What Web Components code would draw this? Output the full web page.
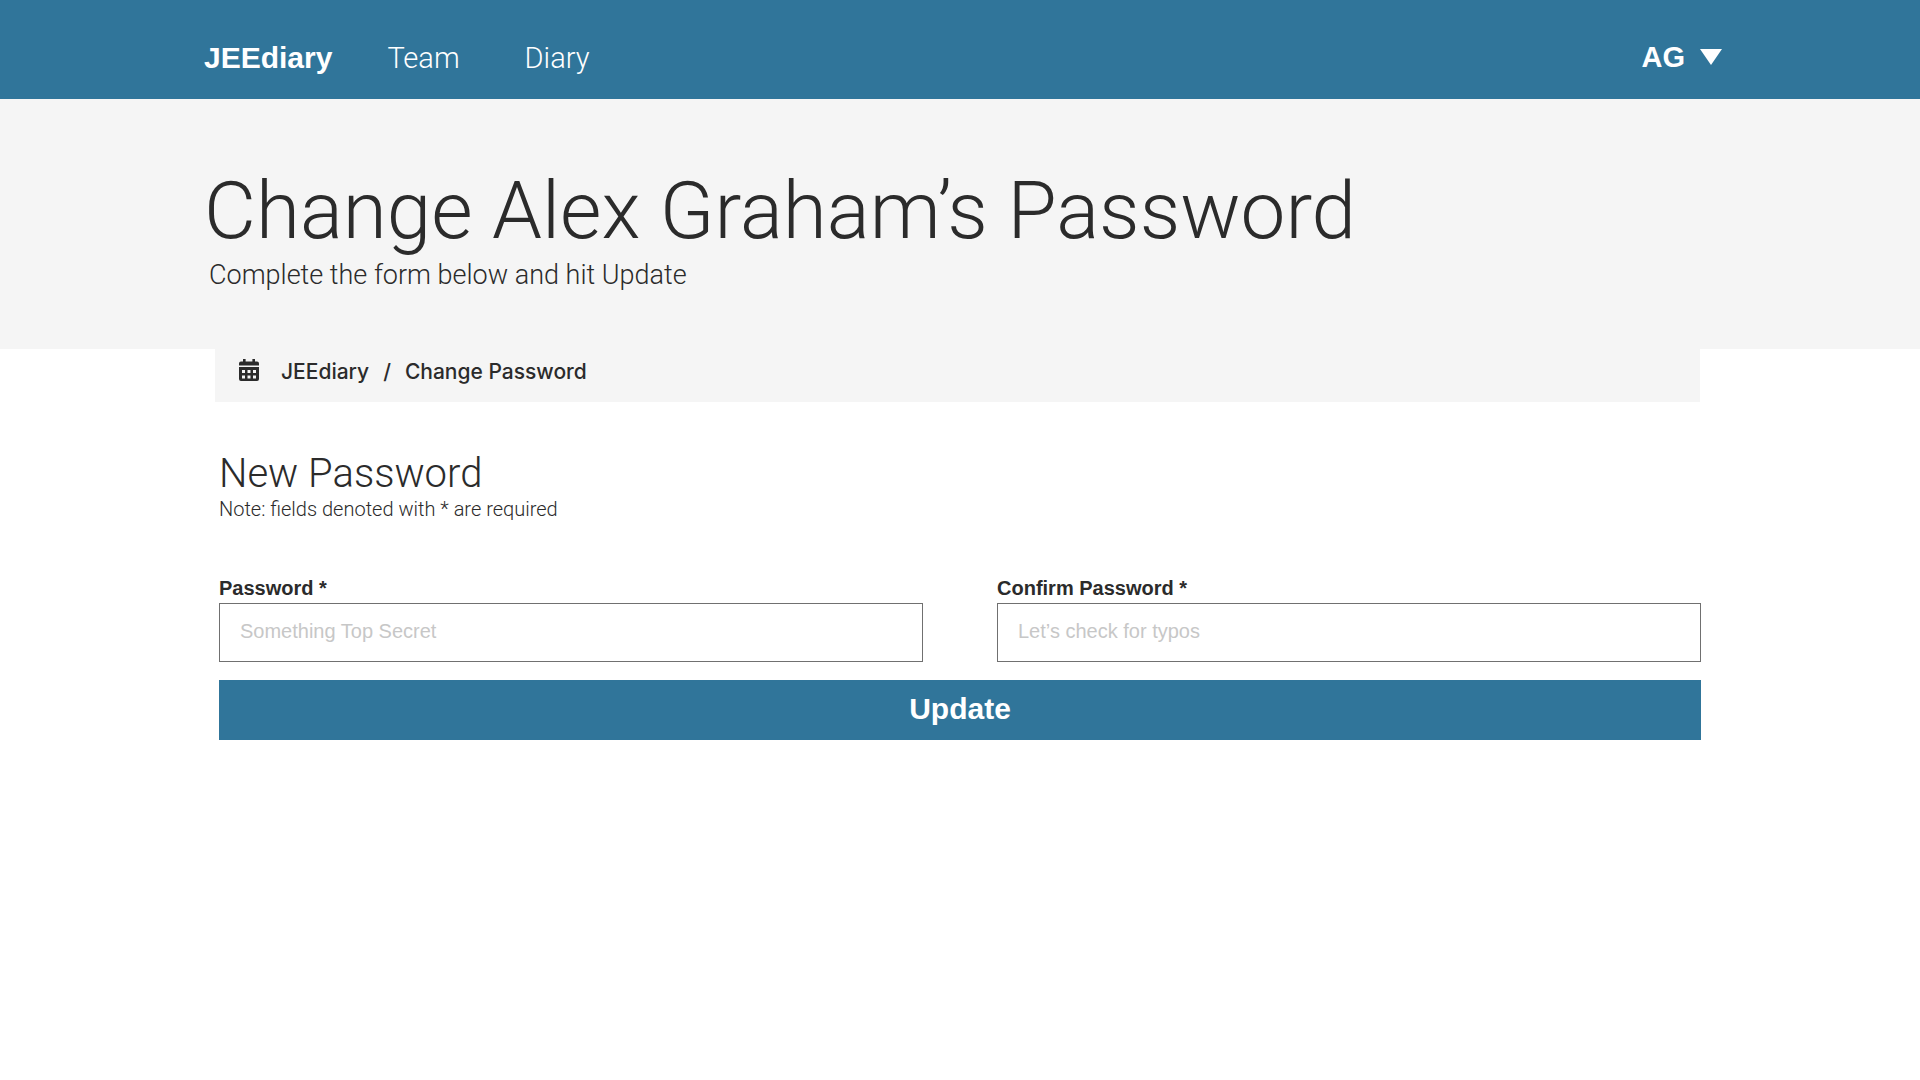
<!DOCTYPE html>
<html lang="en">
<head>
<meta charset="utf-8">
<title>JEEdiary - Change Password</title>
<style>
  :root {
    --brand: #30759a;
    --panel: #f5f5f5;
    --ink: #2b2b2b;
    --light-font: Roboto, "Liberation Sans", sans-serif;
    --light-weight: 300;
  }
  body {
    margin: 0;
    background: #fff;
    color: var(--ink);
    font-family: "Liberation Sans", Arial, sans-serif;
  }
</style>
</head>
<body>
<diary-page></diary-page>

<script>
  const define = (name, markup, setup) => {
    const template = document.createElement("template");
    template.innerHTML = markup;
    customElements.define(name, class extends HTMLElement {
      connectedCallback() {
        if (this.shadowRoot) return;
        this.attachShadow({ mode: "open" }).append(template.content.cloneNode(true));
        if (setup) setup(this, this.shadowRoot);
      }
    });
  };

  define("diary-header", `
    <style>
      :host { display: block; background: var(--brand); color: #fff; }
      .bar { display: flex; align-items: center; justify-content: space-between; height: 99px; padding: 15px 198px 0 204px; box-sizing: border-box; }
      nav { display: flex; align-items: baseline; gap: 65px; padding-top: 2px; font: var(--light-weight) 29px/36px var(--light-font); }
      a { color: inherit; text-decoration: none; }
      .brand { font: bold 30px/36px "Liberation Sans", Arial, sans-serif; margin-right: -10px; }
      button { display: flex; align-items: center; gap: 15px; padding: 0; border: 0; background: none; color: inherit; font: bold 29px/36px "Liberation Sans", Arial, sans-serif; cursor: pointer; }
      svg { display: block; }
      @media (max-width: 1100px) { .bar { padding-inline: 24px; } nav { gap: 32px; } }
    </style>
    <header class="bar">
      <nav aria-label="Main">
        <a class="brand" href="#">JEEdiary</a>
        <a href="#team">Team</a>
        <a href="#diary">Diary</a>
      </nav>
      <button type="button" aria-haspopup="menu">AG
        <svg width="22" height="16" viewBox="0 0 22 16" aria-hidden="true"><path d="M0 0H22L11 16Z" fill="currentColor"/></svg>
      </button>
    </header>`);

  define("page-hero", `
    <style>
      :host { display: block; background: var(--panel); padding: 66px 204px 57px; font-family: var(--light-font); font-weight: var(--light-weight); }
      h1 { margin: 0; font-size: 80px; line-height: 92px; font-weight: inherit; }
      p { margin: 0; padding: 2px 0 0 5px; font-size: 27px; line-height: 33px; }
      @media (max-width: 1100px) { :host { padding-inline: 24px; } h1 { font-size: 48px; line-height: 56px; } }
    </style>
    <h1><slot name="title"></slot></h1>
    <p><slot></slot></p>`);

  define("page-breadcrumb", `
    <style>
      :host { display: block; background: var(--panel); }
      nav { display: flex; align-items: center; gap: 22px; height: 53px; padding: 0 24px 11px; box-sizing: border-box; }
      svg { display: block; }
      ol { display: flex; gap: 14px; margin: 0; padding: 3px 0 0; list-style: none; font: 500 21px/24px Inter, "Liberation Sans", sans-serif; }
      a { color: inherit; text-decoration: none; }
    </style>
    <nav aria-label="Breadcrumb">
      <svg width="20" height="22" viewBox="0 0 20 22" fill="#2b2b2b" aria-hidden="true">
        <path d="M4 0H6.6V2.6H13.4V0H16V2.6H18Q20 2.6 20 4.6V6.5H0V4.6Q0 2.6 2 2.6H4Z"/>
        <path fill-rule="evenodd" d="M0 8H20V20Q20 22 18 22H2Q0 22 0 20ZM3 11V14H6V11ZM8.5 11V14H11.5V11ZM14 11V14H17V11ZM3 16.5V19.5H6V16.5ZM8.5 16.5V19.5H11.5V16.5ZM14 16.5V19.5H17V16.5Z"/>
      </svg>
      <ol>
        <li><a href="#">JEEdiary</a></li>
        <li aria-hidden="true">/</li>
        <li aria-current="page">Change Password</li>
      </ol>
    </nav>`);

  define("password-field", `
    <style>
      :host { display: block; min-width: 0; }
      label { display: block; font-weight: bold; font-size: 20px; line-height: 30px; }
      input { display: block; width: 100%; height: 59px; box-sizing: border-box; margin: 0; padding: 0 20px 2px; border: 1px solid #707070; border-radius: 0; background: #fff; color: var(--ink); font: 20px/24px "Liberation Sans", Arial, sans-serif; }
      input::placeholder { color: #c7c7c7; opacity: 1; }
    </style>
    <label for="field"></label>
    <input id="field" type="password" required>`,
    (host, root) => {
      root.querySelector("label").textContent = host.getAttribute("label");
      root.querySelector("input").placeholder = host.getAttribute("hint");
    });

  define("password-form", `
    <style>
      :host { display: block; }
      h2, p { margin: 0; font-family: var(--light-font); font-weight: var(--light-weight); }
      h2 { font-size: 40px; line-height: 46px; }
      p { font-size: 20px; line-height: 24px; }
      .fields { display: grid; grid-template-columns: 1fr 1fr; gap: 74px; margin: 52px 0 18px; }
      button { display: block; width: 100%; height: 60px; padding: 0 0 2px; border: 0; background: var(--brand); color: #fff; font: bold 30px/36px "Liberation Sans", Arial, sans-serif; cursor: pointer; }
      @media (max-width: 800px) { .fields { grid-template-columns: 1fr; gap: 18px; } }
    </style>
    <form>
      <h2>New Password</h2>
      <p>Note: fields denoted with * are required</p>
      <div class="fields">
        <password-field label="Password *" hint="Something Top Secret"></password-field>
        <password-field label="Confirm Password *" hint="Let’s check for typos"></password-field>
      </div>
      <button type="submit">Update</button>
    </form>`);

  define("diary-page", `
    <style>
      :host { display: block; }
      main { padding: 0 219px; }
      page-breadcrumb { margin: 0 1px 49px -4px; }
      @media (max-width: 1100px) { main { padding: 0 24px; } }
    </style>
    <diary-header></diary-header>
    <page-hero><span slot="title">Change Alex Graham’s Password</span>Complete the form below and hit Update</page-hero>
    <main>
      <page-breadcrumb></page-breadcrumb>
      <password-form></password-form>
    </main>`);
</script>
</body>
</html>
